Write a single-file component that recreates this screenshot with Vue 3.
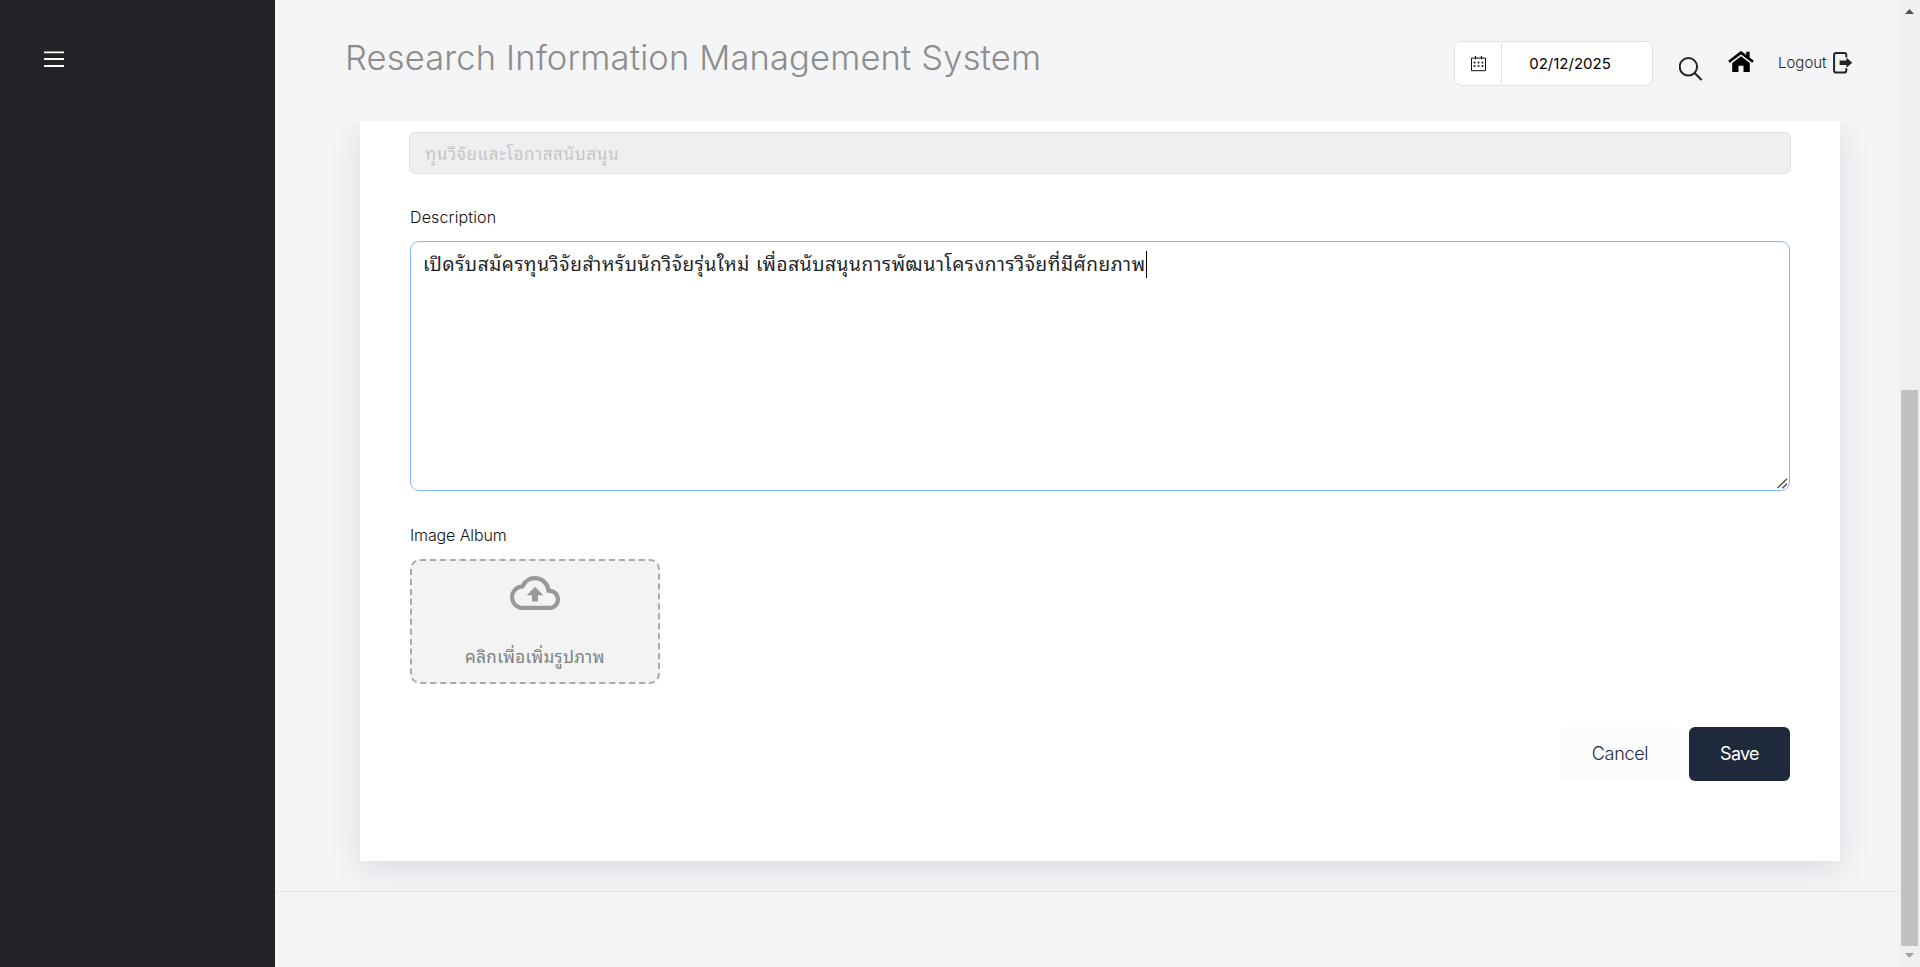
<script setup>
const dots = [[7.5, 10], [11.5, 10], [3.5, 10], [3.5, 6.5], [7.5, 6.5], [11.5, 6.5]]
</script>

<template>
  <div class="app">
    <aside class="sidebar">
      <svg class="menu" width="20" height="18" viewBox="0 0 20 18" stroke="#fff" stroke-width="1.8">
        <path d="M0 2.4h20M0 9h20M0 16h20" />
      </svg>
    </aside>

    <div class="main">
      <header class="header">
        <h1 class="title"><span>Research Information Management System</span></h1>
        <div class="date">
          <div class="date-icon">
            <svg width="15" height="16" viewBox="0 0 15 16" fill="none">
              <path d="M.5 2.1h14v12.6H.5z" stroke="#111" />
              <path d="M4.5 0v3.2M10.5 0v3.2" stroke="#111" stroke-width="1.2" />
              <rect v-for="(d, i) in dots" :key="i" :x="d[0] - 0.9" :y="d[1] - 0.8" width="1.8" height="1.7" fill="#111" />
            </svg>
          </div>
          <div class="date-text">02/12/2025</div>
        </div>
        <svg class="search" width="24" height="24" viewBox="0 0 24 24" fill="none" stroke="#212529" stroke-width="2">
          <circle cx="9.4" cy="9.8" r="8.7" />
          <path d="M15.6 16l7 7" />
        </svg>
        <svg class="home" width="26" height="22" viewBox="0 0 26 22">
          <path d="M1 10.8L13 1.6l12 9.2" fill="none" stroke="#000" stroke-width="2.7" />
          <path d="M18.2.8h3.4v6.6l-3.4-2.6z" />
          <path d="M13 5.3l8.800 6.8V21h-6.3v-6.2h-5V21H4.2v-8.9z" />
        </svg>
        <a class="logout">
          <span>Logout</span>
          <svg width="20" height="22" viewBox="0 0 20 22">
            <path d="M13.3 5.3V3.2Q13.3 1.1 11.2 1.1H3.2Q1.1 1.1 1.1 3.2v15.2Q1.1 20.5 3.2 20.5h8q2.1 0 2.1-2.1v-2.2" fill="none" stroke="#212529" stroke-width="2" />
            <path d="M6.6 8.5h6.8V5.6l5.8 5.2-5.8 5v-2.9H6.6z" fill="#212529" />
          </svg>
        </a>
      </header>

      <section class="body">
        <div class="card">
          <div class="input"><span class="ph">ทุนวิจัยและโอกาสสนับสนุน</span></div>
          <label class="label desc">Description</label>
          <div class="textarea">
            <span class="content">เปิดรับสมัครทุนวิจัยสำหรับนักวิจัยรุ่นใหม่ เพื่อสนับสนุนการพัฒนาโครงการวิจัยที่มีศักยภาพ</span><i class="caret"></i>
            <svg class="grip" width="11" height="11" viewBox="0 0 11 11" stroke="#555" stroke-width="1.5">
              <path d="M.5 10L10 .8M5.5 10.2L10 5.8" />
            </svg>
          </div>
          <label class="label album">Image Album</label>
          <div class="upload">
            <svg width="50" height="34" viewBox="0 4 24 16" preserveAspectRatio="none" fill="#999">
              <path d="M19.35 10.04A7.49 7.49 0 0 0 12 4C9.11 4 6.6 5.64 5.35 8.04A5.994 5.994 0 0 0 0 14c0 3.31 2.69 6 6 6h13c2.76 0 5-2.24 5-5 0-2.64-2.05-4.78-4.65-4.96zM19 18H6c-2.21 0-4-1.79-4-4 0-2.05 1.53-3.76 3.56-3.97l1.07-.11.5-.95A5.469 5.469 0 0 1 12 6c2.62 0 4.88 1.86 5.39 4.43l.3 1.5 1.53.11A2.98 2.98 0 0 1 22 15c0 1.65-1.35 3-3 3zM8 13h2.55v3h2.9v-3H16l-4-4z" />
            </svg>
            <span class="up-text">คลิกเพื่อเพิ่มรูปภาพ</span>
          </div>
          <div class="actions">
            <button class="btn cancel">Cancel</button>
            <button class="btn save">Save</button>
          </div>
        </div>
      </section>
      <footer class="footer"></footer>
    </div>

    <div class="scrollbar">
      <svg width="9" height="5" viewBox="0 0 9 5"><path d="M0 5L4.5 0 9 5z" fill="#505050" /></svg>
      <div class="thumb"></div>
      <svg width="9" height="5" viewBox="0 0 9 5"><path d="M0 0h9L4.5 5z" fill="#a3a3a3" /></svg>
    </div>
  </div>
</template>

<style>
body { overflow: hidden; }
</style>

<style scoped>
* { box-sizing: border-box; }
.app { display: flex; width: 1920px; height: 967px; background: #f3f5f7; font-family: Inter, "Noto Sans Thai Looped", "Noto Looped Thai", "Leelawadee UI", Loma, Waree, Garuda, "Noto Sans Thai", "Noto Sans", sans-serif; color: #212529; overflow: hidden; }
.sidebar { width: 275px; background: #232227; padding: 50px 44px; flex: none; }
.menu { display: block; }
.main { width: 1624px; display: flex; flex-direction: column; flex: none; }
.header { height: 121px; flex: none; display: flex; align-items: flex-start; padding-left: 70px; }
.title { margin: 34px 0 0; width: 1109px; font-size: 34.5px; line-height: 48px; font-weight: 300; letter-spacing: .15px; color: #8c8c8c; white-space: nowrap; }
.date { margin-top: 41px; width: 199px; height: 45px; background: #fff; border: 1px solid #dee2e6; border-radius: 7px; display: flex; padding: 1px 0; }
.date-icon { width: 47px; border-right: 1px solid #dee2e6; display: flex; align-items: center; justify-content: center; }
.date-text { width: 136px; text-align: center; line-height: 42px; font-size: 15px; font-weight: 400; letter-spacing: 0; color: #000; }
.search { margin: 57px 0 0 26px; }
.home { margin: 51px 0 0 25px; }
.logout { margin: 52px 0 0 24px; display: flex; align-items: flex-start; font-size: 15px; line-height: 22px; font-weight: 300; }
.logout span { width: 55px; white-space: nowrap; }
.body { height: 770px; flex: none; overflow: hidden; padding: 0 59px 0 85px; }
.card { height: 740px; background: #fff; padding: 11px 49px 0; box-shadow: 0 8px 30px rgba(40, 45, 60, .12); display: flex; flex-direction: column; }
.input { height: 42px; border: 1px solid #dee2e6; border-radius: 6px; background: #efeff1; padding-left: 15px; line-height: 42px; color: #c6c6c6; font-size: 17px; }
.ph { letter-spacing: .63px; }
.label { display: block; margin-left: 1px; font-size: 16px; line-height: 24px; font-weight: 300; color: #111; }
.desc { margin-top: 31px; letter-spacing: .15px; }
.textarea { margin: 12px 1px 0; height: 250px; border: 1px solid #86b7fe; border-radius: 9px; padding: 9px 13px 9px 12px; display: flex; align-items: flex-start; position: relative; }
.content { font-size: 19px; line-height: 28px; letter-spacing: .6px; white-space: nowrap; }
.caret { width: 1px; height: 27px; background: #000; }
.grip { position: absolute; right: 1px; bottom: 1px; }
.album { margin-top: 32px; letter-spacing: -.12px; }
.upload { margin: 12px 0 0 1px; width: 250px; height: 125px; border: 2px dashed #aaa; border-radius: 10px; background: #f3f3f3; display: flex; flex-direction: column; align-items: center; padding-top: 15px; color: #808080; }
.up-text { margin-top: 35px; font-size: 17px; line-height: 24px; letter-spacing: .35px; white-space: nowrap; }
.actions { display: flex; justify-content: flex-end; gap: 10px; margin: 43px 1px 0 0; }
.btn { height: 54px; border: 0; border-radius: 6px; font: 300 18px Inter, sans-serif; padding: 0 0 1px; letter-spacing: -.3px; }
.cancel { width: 118px; background: #fbfbfb; color: #1e293b; }
.save { width: 101px; background: #1e293b; color: #fff; font-weight: 400; letter-spacing: -.7px; }
.footer { border-top: 1px solid #e2e4e7; flex: 1; }
.scrollbar { width: 21px; background: #f0f0f0; display: flex; flex-direction: column; align-items: center; padding-top: 9px; }
.thumb { width: 17px; height: 556px; background: #c1c1c1; margin: 376px 0 7px; }
</style>
